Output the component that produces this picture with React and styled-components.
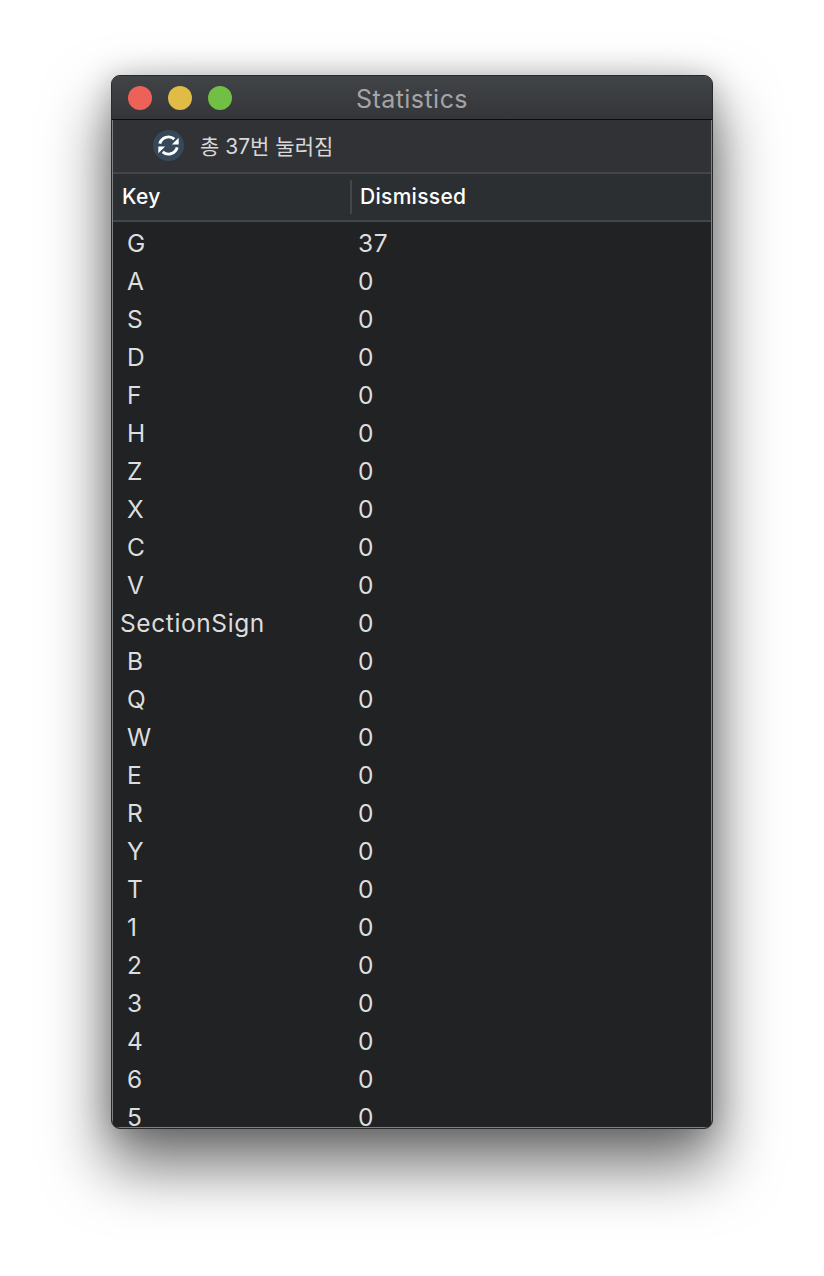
import React from "react";
import styled, { createGlobalStyle } from "styled-components";

const Global = createGlobalStyle`
  html, body { margin: 0; padding: 0; background: #fff; }
  body { font-family: Inter, "Noto Sans CJK KR", sans-serif; }
`;

const Page = styled.div`
  width: 824px;
  height: 1276px;
  padding: 75px 111px 0;
  box-sizing: border-box;
  overflow: hidden;
  background: #fff;
`;

const Win = styled.div`
  width: 602px;
  height: 1054px;
  box-sizing: border-box;
  border: 1px solid #2a2a2a;
  border-radius: 9px;
  box-shadow: inset 0 0 0 1px #7f8082, 0 34px 62px 4px rgba(0, 0, 0, 0.55), 0 2px 30px rgba(0, 0, 0, 0.22);
  display: flex;
  flex-direction: column;
  overflow: hidden;
  background: #212224;
`;

const TitleBar = styled.div`
  height: 44px;
  flex: none;
  box-sizing: border-box;
  border-bottom: 1px solid #0c0c0c;
  background: linear-gradient(#414447, #343538);
  display: flex;
  align-items: center;
  padding: 0 16px;
  gap: 16px;
  position: relative;
`;

const Light = styled.span`
  width: 24px;
  height: 24px;
  border-radius: 50%;
  background: ${(p) => p.$color};
`;

const Title = styled.div`
  position: absolute;
  inset: 2px 0 0;
  display: flex;
  align-items: center;
  justify-content: center;
  color: #a3a4a6;
  font-size: 25px;
  letter-spacing: 0.45px;
`;

const Toolbar = styled.div`
  height: 52px;
  flex: none;
  box-sizing: border-box;
  background: #313235;
  display: flex;
  align-items: center;
  gap: 16px;
  padding: 0 0 1px 40px;
  margin: 0 1px;
  color: #d7d8d9;
  font-size: 21px;
`;

const ToolbarLabel = styled.span`
  padding-bottom: 2px;
`;

const HeaderRow = styled.div`
  height: 50px;
  flex: none;
  box-sizing: border-box;
  margin: 0 1px;
  background: #2c2f32;
  border-top: 2px solid #434649;
  border-bottom: 2px solid #434649;
  display: grid;
  grid-template-columns: 237px 1fr;
  align-items: center;
  color: #fff;
  font-size: 21px;
  font-weight: 500;
  letter-spacing: 0.3px;
`;

const HeadCell = styled.div`
  height: 34px;
  box-sizing: border-box;
  padding-bottom: 2px;
  display: flex;
  align-items: center;
  padding-left: ${(p) => p.$pad}px;
  ${(p) => p.$divided && "border-left: 2px solid #43464a;"}
`;

const Body = styled.div`
  flex: 1;
  min-height: 0;
  overflow: hidden;
  margin: 0 1px 1px;
  padding-top: 2px;
  background: #212224;
`;

const Row = styled.div`
  height: 38px;
  display: grid;
  grid-template-columns: 245px 1fr;
  align-items: center;
  color: #dcdddd;
  font-size: 24.5px;
  letter-spacing: 0.6px;
`;

const KeyCell = styled.div`
  padding-left: ${(p) => (p.$wide ? 7 : 14)}px;
`;

const rows = [
  ["G", 37], ["A", 0], ["S", 0], ["D", 0], ["F", 0], ["H", 0], ["Z", 0], ["X", 0], ["C", 0], ["V", 0],
  ["SectionSign", 0], ["B", 0], ["Q", 0], ["W", 0], ["E", 0], ["R", 0], ["Y", 0], ["T", 0], ["1", 0],
  ["2", 0], ["3", 0], ["4", 0], ["6", 0], ["5", 0],
];

const RefreshIcon = () => (
  <svg width="31" height="31" viewBox="0 0 32 32" aria-hidden="true">
    <circle cx="16" cy="16" r="16" fill="#36495a" />
    <g fill="none" stroke="#fff" strokeWidth="3">
      <path d="M7 14A9.2 9.2 0 0 1 22 9.5" />
      <path d="M25 18A9.2 9.2 0 0 1 10 22.5" />
    </g>
    <path d="M26.5 8V15h-7z" fill="#fff" />
    <path d="M5.5 24V17h7z" fill="#fff" />
  </svg>
);

export default function App() {
  return (
    <Page>
      <Global />
      <Win>
        <TitleBar>
          <Light $color="#ed6158" />
          <Light $color="#e0bc46" />
          <Light $color="#72bf45" />
          <Title>Statistics</Title>
        </TitleBar>
        <Toolbar>
          <RefreshIcon />
          <ToolbarLabel>총 37번 눌러짐</ToolbarLabel>
        </Toolbar>
        <HeaderRow>
          <HeadCell $pad={9}>Key</HeadCell>
          <HeadCell $pad={8} $divided>Dismissed</HeadCell>
        </HeaderRow>
        <Body>
          {rows.map(([k, v]) => (
            <Row key={k}>
              <KeyCell $wide={k.length > 1}>{k}</KeyCell>
              <div>{v}</div>
            </Row>
          ))}
        </Body>
      </Win>
    </Page>
  );
}
